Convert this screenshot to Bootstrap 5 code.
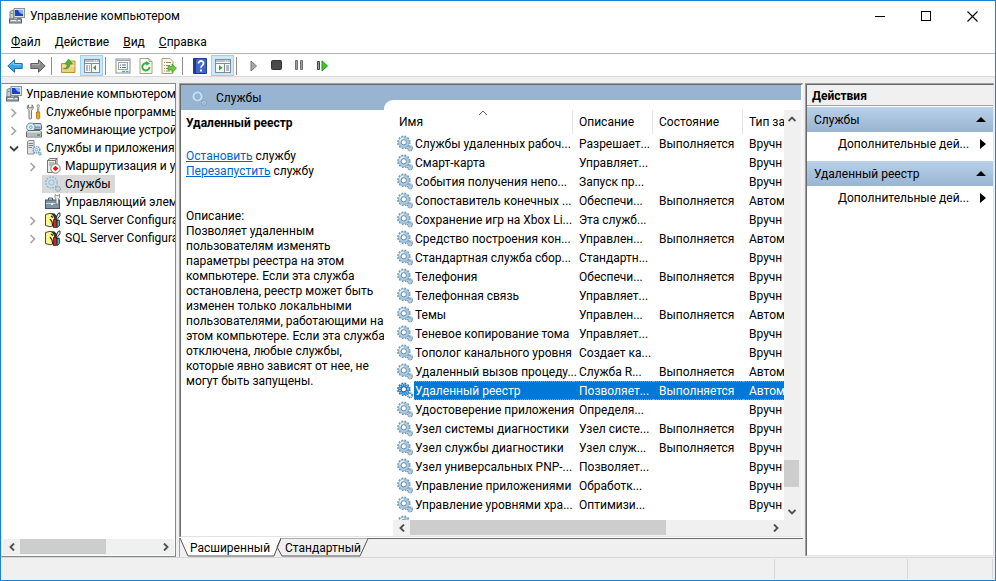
<!DOCTYPE html>
<html lang="ru">
<head>
<meta charset="utf-8">
<meta name="viewport" content="width=device-width, initial-scale=1">
<title>Управление компьютером</title>
<link href="https://cdn.jsdelivr.net/npm/bootstrap@5.3.0/dist/css/bootstrap.min.css" rel="stylesheet">
<style>
  body { font-family: Roboto, "Open Sans", "Noto Sans", sans-serif; font-size: 12px; line-height: 18px; color: #000; background: #f0f0f0; }
  button { font: inherit; color: inherit; background: none; border: 0; padding: 0; }
  svg { flex: none; display: block; }
  .win { border: 1px solid #1883d7; }
  .titlebar { height: 30px; padding-left: 8px; }
  .titlebar .caption-btn { width: 46px; height: 29px; display: flex; align-items: center; justify-content: center; }
  .title-text { font-weight: 400; font-size: 12px; line-height: 18px; margin: 0 0 0 5px; }
  .menubar { height: 23px; padding-left: 10px; gap: 14px; border-bottom: 1px solid #b1b4bc; }
  .toolbar { height: 23px; padding: 1px 0 0 2px; border-bottom: 1px solid #dadada; }
  .tool { width: 23px; height: 21px; display: flex; align-items: center; justify-content: center; }
  .tool.on { background: #cce8ff; outline: 1px solid #99d1ff; outline-offset: -1px; }
  .tool-sep { width: 1px; height: 18px; background: #8d8d8d; margin: 0 5px 0 2px; }
  .panes { padding: 6px 1px 0 0; min-height: 0; }
  .tree-pane { width: 175px; border: 1px solid #828790; border-left-color: #e3e3e3; background: #fff; }
  .tree-pane ul { padding-top: 1px; }
  .tree-row { height: 18px; white-space: nowrap; }
  .twist { width: 20px; height: 18px; padding-top: 2px; display: flex; justify-content: center; align-items: center; flex: none; }
  .tree-row svg.node-ico { margin-right: 4px; }
  .lvl0 { padding-left: 4px; }
  .lvl1 { padding-left: 2px; }
  .lvl2 { padding-left: 21px; }
  .lvl1 .twist, .lvl2 .twist { margin-right: 2px; }
  .picked { background: #d9d9d9; padding: 0 4px 0 3px; margin-left: -3px; }
  .center-pane { margin-left: 3px; min-width: 0; border-left: 1px solid #a0a0a0; border-top: 1px solid #a0a0a0; }
  .center-body { border-left: 1px solid #696969; border-top: 1px solid #696969; border-right: 2px solid #f8f8f8; background: #fff; min-height: 0; border-bottom: 1px solid #e3e3e3; }
  .pane-head { height: 25px; flex: none; padding-left: 10px; background: #99b4d1; }
  .pane-head h2 { font-size: 12px; line-height: 18px; font-weight: 400; margin: 0 0 0 9px; }
  .pane-split { min-height: 0; }
  .detail { width: 203px; flex: none; padding: 6px 0 0 5px; line-height: 15px; white-space: nowrap; }
  .detail h3 { font-size: 12px; line-height: 15px; font-weight: 700; margin: 0 0 18px; }
  .detail p { margin: 0 0 30px; }
  .detail a { color: #0066cc; }
  .list-panel { margin-top: -10px; padding: 10px 0 0 9px; background: #fff; border-top-left-radius: 9px; min-width: 0; min-height: 0; display: grid; grid-template-columns: minmax(0, 1fr) 17px; grid-template-rows: minmax(0, 1fr) 16px; }
  .list-view { overflow: hidden; }
  .svc { table-layout: fixed; width: 450px; border-collapse: separate; border-spacing: 0; line-height: 15px; white-space: nowrap; }
  .col-name { width: 180px; } .col-desc { width: 80px; } .col-state { width: 90px; } .col-start { width: 100px; }
  .svc th { height: 24px; padding: 0 6px; font-weight: 400; position: relative; vertical-align: middle; }
  .svc th::after { content: ""; position: absolute; right: 0; top: 0; bottom: 0; width: 1px; background: #e5e5e5; }
  .svc td { height: 19px; padding: 2px 0 0 6px; border: 0 dotted transparent; border-width: 1px 0; }
  .svc td.nm { padding: 0 0 0 4px; border: 0; }
  .nm-in { display: flex; height: 19px; }
  .nm-in svg { margin: 1px 1px 0 0; }
  .nm-in span { flex: 1; min-width: 0; padding: 2px 0 0 1px; border: 1px dotted transparent; border-right: 0; border-left: 0; }
  .svc tr.sel span, .svc tr.sel td:not(.nm) { background: #0078d7; color: #fff; border-color: #e0904a; }
  .sort { position: absolute; left: 85px; top: 0; }
  .sb { background: #f0f0f0; }
  .sb button { flex: none; width: 17px; height: 16px; display: flex; align-items: center; justify-content: center; }
  .sb.v button { width: 16px; height: 17px; }
  .thumb { background: #cdcdcd; min-width: 0; }
  .tree-pane .sb { height: 16px; margin: 0 1px 1px 1px; }
  .tree-pane .sb .thumb { flex: 87 1 0; margin-bottom: 1px; } .tree-pane .sb .rest { flex: 51 1 0; }
  .h-list .thumb { flex: 256 1 0; margin-bottom: 1px; } .h-list .rest { flex: 101 1 0; }
  .sb.v .before { flex: 333 1 0; } .sb.v .thumb { flex: 27 1 0; margin-right: 2px; } .sb.v .after { flex: 16 1 0; }
  .tabs { height: 20px; flex: none; position: relative; margin-left: -1px; border-top: 1px solid #fff; }
  .tabs::before { content: ""; position: absolute; left: 103px; right: 0; top: 0; height: 1px; background: #696969; }
  .tabs svg { position: absolute; left: 0; top: 0; }
  .tabs button { position: relative; height: 19px; padding-top: 1px; text-align: center; white-space: nowrap; }
  .tab-a { width: 82px; margin-left: 10px; } .tab-b { width: 78px; margin-left: 13px; }
  .act-pane { width: 189px; flex: none; margin: 0 0 1px 2px; border-left: 1px solid #a0a0a0; border-top: 1px solid #a0a0a0; }
  .act-body { border-left: 1px solid #696969; border-top: 1px solid #696969; border-right: 1px solid #e3e3e3; border-bottom: 1px solid #e3e3e3; background: #fff; }
  .act-body h2 { font-size: 12px; line-height: 20px; height: 21px; font-weight: 700; margin: 0 0 1px; padding: 1px 0 0 5px; background: #f0f0f0; border-bottom: 1px solid #a0a0a0; }
  .act-group { height: 25px; width: 100%; padding: 0 7px; background: linear-gradient(#b9d1ea, #99b4d1); }
  .act-item { height: 24px; width: 100%; padding: 0 7px 0 31px; margin-bottom: 5px; }
  .status { height: 23px; flex: none; border-top: 1px solid #d7d7d7; padding: 1px 2px 1px 0; }
  .status div { border-right: 1px solid #d7d7d7; }
  .st-2 { width: 133px; } .st-3 { width: 85px; }
</style>
<script src="https://cdn.jsdelivr.net/npm/bootstrap@5.3.0/dist/js/bootstrap.bundle.min.js"></script>
</head>
<body>
<svg width="0" height="0" class="position-absolute" aria-hidden="true">
  <symbol id="pc" viewBox="0 0 16 16">
    <path d="M1 3.500 4.500 2v9H1z" fill="#c9ced2" stroke="#7d868c"/><path d="M1.500 5.500h2" stroke="#3fb23f"/>
    <rect x="5" y=".5" width="10.500" height="9" fill="#dfe4e8" stroke="#8a939b"/>
    <rect x="6" y="2" width="8" height="6" fill="#1f3fc4"/><path d="M9 2h5v4c-3 0-4-2-5-4z" fill="#8db4f2"/>
    <path d="M8 9.500h4v1.500H8z" fill="#8a939b"/>
    <rect x=".5" y="11" width="12" height="4" fill="#a4acb2" stroke="#5d666d"/><path d="M2 12.500h5M9 12.500h2" stroke="#eef1f3"/>
  </symbol>
  <symbol id="tools" viewBox="0 0 16 16">
    <path d="M2.500.8Q1 2 1.200 4.200L3 6.500v8q1.200 1.200 2.500 0v-8L7.200 4.200Q7.500 2 6 .8v3H2.500z" fill="#e4e7e9" stroke="#6d6d6d" stroke-width=".9"/>
    <path d="M11.500.8h1.500l.5 1.500-.7 1.200V8h-1.200V3.500L11 2.300z" fill="#ddd" stroke="#777" stroke-width=".7"/>
    <path d="M10.500 8h3.200v6.200q-1.600 1.800-3.200 0z" fill="#f1a51d" stroke="#a96b0c" stroke-width=".8"/>
  </symbol>
  <symbol id="disks" viewBox="0 0 16 16">
    <path d="M7 1.500h7.500l1 2V7.500H6z" fill="#d4d8da" stroke="#666"/><path d="M8 4.500h6.500v2H8z" fill="#52a8cf"/>
    <circle cx="4.800" cy="5.200" r="4.200" fill="#d8edf3" stroke="#5f93a5"/><circle cx="4.800" cy="5.200" r="1.300" fill="#fff" stroke="#6fa2b3"/>
    <path d="M.5 10l1.500-1.500h12L15.500 10v5H.5z" fill="#e2e5e7" stroke="#666"/><path d="M1 10.500h14v4H1z" fill="#b4babd"/>
    <path d="M11 12h3v2h-3z" fill="#20c828"/>
  </symbol>
  <symbol id="srv" viewBox="0 0 16 16">
    <path d="M1.500 1.500 3 .5h5v13.500H1.500z" fill="#dfe3e5" stroke="#868e93"/><path d="M2.500 3.500H7M2.500 5.500H7M2.500 7.500H6" stroke="#7b858a"/>
    <circle cx="10.500" cy="9.700" r="3.300" fill="#e4f0f8" stroke="#6f97b5" stroke-width="1.400" stroke-dasharray="1.300 .8"/>
    <circle cx="10.500" cy="9.700" r="1.300" fill="#fff" stroke="#6f97b5" stroke-width=".8"/>
    <circle cx="14" cy="13.800" r="1.500" fill="#a9c8de" stroke="#6f97b5" stroke-dasharray="1 .7"/>
  </symbol>
  <symbol id="route" viewBox="0 0 16 16">
    <path d="M2.500 2.500 5 .5h7l-1.500 2zM2.500 2.500h8v12h-8z" fill="#ecece8" stroke="#77776f"/><path d="M10.500 2.500 12 .5v6" fill="none" stroke="#77776f"/>
    <path d="M4 5h5M4 7h3" stroke="#888"/><circle cx="10.500" cy="10.500" r="4.700" fill="#fff" stroke="#777"/>
    <path d="M10.500 7.800l2.800 2.700-2.800 2.700-2.800-2.700z" fill="#f01010"/>
  </symbol>
  <symbol id="gears" viewBox="0 0 16 16">
    <circle cx="6.800" cy="6.800" r="5.900" fill="none" stroke="#6b93b0" stroke-width="1.700" stroke-dasharray="1.700 1.390"/>
    <circle cx="6.800" cy="6.800" r="4.100" fill="#fff" stroke="#a8cce4" stroke-width="2.800"/>
    <circle cx="6.800" cy="6.800" r="5.300" fill="none" stroke="#86abc5" stroke-width=".7"/>
    <circle cx="6.800" cy="6.800" r="2.600" fill="none" stroke="#587c98" stroke-width=".9"/>
    <path d="M2.800 6a4.200 4.200 0 0 1 4-3.300" fill="none" stroke="#e8f5fc" stroke-width="1.300"/>
    <circle cx="13" cy="12.800" r="2.400" fill="#dbeaf4" stroke="#6a90ad" stroke-width="1.500" stroke-dasharray="1 .5"/>
    <circle cx="13" cy="12.800" r="1" fill="#fff" stroke="#7fa5c0" stroke-width=".8"/>
  </symbol>
  <symbol id="gears-soft" viewBox="0 0 16 16">
    <circle cx="6.500" cy="6.500" r="5.400" fill="none" stroke="#84b4d6" stroke-width="1.700" stroke-dasharray="1.700 1.130"/>
    <circle cx="6.500" cy="6.500" r="4" fill="none" stroke="#c6e0f0" stroke-width="2.200"/>
    <circle cx="6.500" cy="6.500" r="2.700" fill="none" stroke="#86adc8" stroke-width=".7"/>
    <circle cx="13" cy="12.800" r="2" fill="none" stroke="#8098aa" stroke-width="2" stroke-dasharray="1 .57"/>
    <circle cx="13" cy="12.800" r="1.600" fill="none" stroke="#c9dce8" stroke-width=".8"/>
  </symbol>
  <symbol id="gears-sel" viewBox="0 0 16 16">
    <circle cx="6.800" cy="6.800" r="5.900" fill="none" stroke="#2a6fa8" stroke-width="1.700" stroke-dasharray="1.700 1.390"/>
    <circle cx="6.800" cy="6.800" r="4.100" fill="#fff" stroke="#1f7fcb" stroke-width="3"/>
    <circle cx="6.800" cy="6.800" r="4.100" fill="none" stroke="#8fc0e4" stroke-width="2.600" stroke-dasharray="1 1.150"/>
    <circle cx="6.800" cy="6.800" r="2.600" fill="none" stroke="#24587f"/>
    <circle cx="13" cy="12.800" r="2.200" fill="#fff" stroke="#2f7cb8" stroke-width="1.800" stroke-dasharray="1 .6"/>
  </symbol>
  <symbol id="wmi" viewBox="0 0 16 16">
    <path d="M3.500 6V4h4v2" fill="none" stroke="#555"/><rect x=".5" y="6" width="14" height="8.500" fill="#7d94a2" stroke="#44545e"/>
    <path d="M1 9.500h13" stroke="#c5d5de"/><path d="M6 9h2v2H6z" fill="#eee"/>
    <path d="M10 .5v3l1 1.500v5h2.500V5l1-1.500v-3L13 1.500h-1.500z" fill="#e9edef" stroke="#777" stroke-width=".8"/>
  </symbol>
  <symbol id="sql" viewBox="0 0 16 16">
    <path d="M.5 2.500Q5 .2 9.500 2.500v11Q5 16 .5 13.500z" fill="#fbf58a" stroke="#55501a"/>
    <path d="M2 4.500h1M4 3.500h1M2 7.500h1M2 10.500h1M3 12.500h1M5 13.500h1" stroke="#fff"/>
    <path d="M5 7l2 3 .8 4M6 4l2 1.500" stroke="#222" stroke-width="1.200" fill="none"/>
    <path d="M6 1.500h3.500L12 4v2L10 7.500 8.500 4.500z" fill="#333"/><path d="M15 .8v3L12.800 6.500 13 9l-1.800-.5.3-3.500L13 1.500z" fill="#ddd" stroke="#111" stroke-width=".8"/>
    <path d="M8.500 7.500h3V15.500h-3z" fill="#e81c1c" stroke="#111" stroke-width=".7"/><path d="M12.300 8.500h2.200v5l-2.200 2z" fill="#48b8d8" stroke="#111" stroke-width=".7"/>
  </symbol>
  <symbol id="chev-r" viewBox="0 0 8 10"><path d="M1.500 1l4 4-4 4" fill="none" stroke="#a6a6a6" stroke-width="1.700"/></symbol>
  <symbol id="chev-d" viewBox="0 0 10 8"><path d="M1 1.500l4 4 4-4" fill="none" stroke="#404040" stroke-width="1.800"/></symbol>
  <symbol id="sb-l" viewBox="0 0 8 8"><path d="M6 .5L2.500 4 6 7.500" fill="none" stroke="#505050" stroke-width="1.900"/></symbol>
  <symbol id="sb-r" viewBox="0 0 8 8"><path d="M2 .5L5.500 4 2 7.500" fill="none" stroke="#505050" stroke-width="1.900"/></symbol>
  <symbol id="sb-u" viewBox="0 0 8 8"><path d="M.5 6L4 2.500 7.500 6" fill="none" stroke="#505050" stroke-width="1.900"/></symbol>
  <symbol id="sb-d" viewBox="0 0 8 8"><path d="M.5 2L4 5.500 7.500 2" fill="none" stroke="#505050" stroke-width="1.900"/></symbol>
</svg>

<div class="win vh-100 d-flex flex-column overflow-hidden">
  <header class="bg-white">
    <div class="titlebar d-flex align-items-center">
      <svg width="16" height="16"><use href="#pc"/></svg>
      <h1 class="title-text flex-grow-1 text-nowrap">Управление компьютером</h1>
      <button class="caption-btn" aria-label="Свернуть"><svg width="11" height="11"><path d="M0 5.500h10" stroke="#000"/></svg></button>
      <button class="caption-btn" aria-label="Развернуть"><svg width="11" height="11"><rect x=".5" y=".5" width="9" height="9" fill="none" stroke="#000"/></svg></button>
      <button class="caption-btn" aria-label="Закрыть"><svg width="11" height="11"><path d="M.5.5l10 10M10.500.5l-10 10" stroke="#000" stroke-width="1.100"/></svg></button>
    </div>
    <nav class="menubar d-flex align-items-center" aria-label="Меню">
      <button><u>Ф</u>айл</button><button><u>Д</u>ействие</button><button><u>В</u>ид</button><button><u>С</u>правка</button>
    </nav>
    <div class="toolbar d-flex align-items-center" role="toolbar" aria-label="Панель инструментов">
      <button class="tool" aria-label="Назад"><svg width="16" height="14"><path d="M.8 7L7.500.8v3.700h7.700v5H7.500v3.700z" fill="#35a6e6" stroke="#1b6fae"/><path d="M3 6.500L6.500 3v2.700h7.500" fill="none" stroke="#8ed4f7"/></svg></button>
      <button class="tool" aria-label="Вперед"><svg width="16" height="14"><path d="M15.200 7L8.500.8v3.700H.8v5h7.700v3.700z" fill="#8c8c8c" stroke="#5f5f5f"/><path d="M2 5.700h7.500V3" fill="none" stroke="#b5b5b5"/></svg></button>
      <span class="tool-sep"></span>
      <button class="tool" aria-label="На один уровень вверх"><svg width="15" height="16"><path d="M.5 5.500h5l1-2.500H14v11.500H.5z" fill="#f0cf80" stroke="#b8913b"/><path d="M1 8h12.500" stroke="#fbe9b2"/><path d="M2.500 10.500C6 10.500 6 8.500 6 6H4L7.500 1l4 5H9c0 4-3 5.500-6.500 4.500z" fill="#49b934" stroke="#2b8a1c" stroke-width=".6"/></svg></button>
      <button class="tool on" aria-label="Показать дерево консоли"><svg width="16" height="14"><rect x=".5" y=".5" width="15" height="13" fill="#f6f8fa" stroke="#7f8b96"/><path d="M1 2h14M1 4.500h14" stroke="#7f8b96"/><path d="M10 2h1M12 2h1" stroke="#fff"/><path d="M7.500 5v8" stroke="#7f8b96"/><path d="M2 7h2M2 9h2M2 11h2M5 7h1M5 9h1M5 11h1" stroke="#6b7a88"/><path d="M12 6v5.500L9 8.800z" fill="#2fa52b"/></svg></button>
      <span class="tool-sep"></span>
      <button class="tool" aria-label="Свойства"><svg width="16" height="16"><rect x="1" y="1" width="14" height="14" fill="#fdfdfd" stroke="#8a8f96"/><path d="M1.500 2.500h13" stroke="#9aa2ab"/><rect x="3.500" y="4.500" width="9" height="7" fill="#f5f7f9" stroke="#9aa4af"/><path d="M5 7h1M7 7h4M5 9.500h1M7 9.500h4" stroke="#53718f"/><path d="M7 13.500h3M11 13.500h2.500" stroke="#35b2e6" stroke-width="1.500"/></svg></button>
      <button class="tool" aria-label="Обновить"><svg width="14" height="16"><path d="M1 .5h9l3 3v12H1z" fill="#fdfdfa" stroke="#a2a294"/><path d="M10 .5v3h3" fill="none" stroke="#a2a294"/><path d="M10.500 9A3.600 3.600 0 1 1 7.500 5.300" fill="none" stroke="#35ae35" stroke-width="1.900"/><path d="M7 3l4 2.500-3.800 2.300z" fill="#35ae35"/></svg></button>
      <button class="tool" aria-label="Экспортировать список"><svg width="16" height="16"><path d="M1 .5h8l3 3v12H1z" fill="#fcf9e4" stroke="#a8a283"/><path d="M3 4.500h1M5 4.500h5M3 7.500h1M5 7.500h4M3 10.500h1M5 10.500h3M3 13h1M5 13h4" stroke="#8c8971"/><path d="M7 8.500h4V6l4.500 4.200L11 14.500V12H7z" fill="#6cca3b" stroke="#3b9622" stroke-width=".7"/></svg></button>
      <span class="tool-sep"></span>
      <button class="tool" aria-label="Справка"><svg width="14" height="16"><path d="M.5.5h13v15H.5z" fill="#3f63cf" stroke="#203b8c"/><path d="M1 1h2v14H1z" fill="#203b8c"/><path d="M5.500 5.500c0-3.500 5.200-3.200 5 0-.2 2-2.500 1.800-2.500 4.300" fill="none" stroke="#fff" stroke-width="1.800"/><path d="M7 11.500h2v2H7z" fill="#fff"/></svg></button>
      <button class="tool on" aria-label="Показать панель действий"><svg width="16" height="14"><rect x=".5" y=".5" width="15" height="13" fill="#f6f8fa" stroke="#7f8b96"/><path d="M1 2h14M1 4.500h14" stroke="#7f8b96"/><path d="M10 2h1M12 2h1" stroke="#fff"/><path d="M9.500 5v8" stroke="#7f8b96"/><path d="M11 7h3M11 9h3M11 11h3" stroke="#6b7a88"/><path d="M4 6v5.500L7.500 8.800z" fill="#2fa52b"/></svg></button>
      <span class="tool-sep"></span>
      <button class="tool" aria-label="Запустить службу"><svg width="8" height="12"><path d="M1 1l5.500 5L1 11z" fill="#a8a8a8" stroke="#757575"/></svg></button>
      <button class="tool" aria-label="Остановить службу"><svg width="11" height="11"><rect x=".5" y=".5" width="10" height="9" rx="1" fill="#4a4a4a" stroke="#333"/></svg></button>
      <button class="tool" aria-label="Приостановить службу"><svg width="9" height="11"><path d="M.5.5h2v9h-2zM5.500.5h2v9h-2z" fill="#a0a0a0" stroke="#6e6e6e"/></svg></button>
      <button class="tool" aria-label="Перезапустить службу"><svg width="13" height="12"><path d="M1.500 1.500h2v8h-2z" fill="#999" stroke="#444"/><path d="M6 .8L11.500 6 6 11z" fill="#43c529" stroke="#21931a"/></svg></button>
    </div>
  </header>

  <main class="panes d-flex flex-grow-1">
    <nav class="tree-pane d-flex flex-column flex-shrink-0 overflow-hidden" aria-label="Дерево консоли">
      <ul class="list-unstyled m-0 flex-grow-1 overflow-hidden">
        <li class="tree-row lvl0 d-flex align-items-center"><svg class="node-ico" width="16" height="16"><use href="#pc"/></svg>Управление компьютером</li>
        <li class="tree-row lvl1 d-flex align-items-center"><button class="twist" aria-label="Развернуть"><svg width="8" height="10"><use href="#chev-r"/></svg></button><svg class="node-ico" width="16" height="16"><use href="#tools"/></svg>Служебные программы</li>
        <li class="tree-row lvl1 d-flex align-items-center"><button class="twist" aria-label="Развернуть"><svg width="8" height="10"><use href="#chev-r"/></svg></button><svg class="node-ico" width="16" height="16"><use href="#disks"/></svg>Запоминающие устрой</li>
        <li class="tree-row lvl1 d-flex align-items-center"><button class="twist" aria-label="Свернуть"><svg width="10" height="8"><use href="#chev-d"/></svg></button><svg class="node-ico" width="16" height="16"><use href="#srv"/></svg>Службы и приложения</li>
        <li class="tree-row lvl2 d-flex align-items-center"><button class="twist" aria-label="Развернуть"><svg width="8" height="10"><use href="#chev-r"/></svg></button><svg class="node-ico" width="16" height="16"><use href="#route"/></svg>Маршрутизация и у</li>
        <li class="tree-row lvl2 d-flex align-items-center"><span class="twist"></span><span class="picked d-flex align-items-center"><svg class="node-ico" width="16" height="16"><use href="#gears-soft"/></svg>Службы</span></li>
        <li class="tree-row lvl2 d-flex align-items-center"><span class="twist"></span><svg class="node-ico" width="16" height="16"><use href="#wmi"/></svg>Управляющий элем</li>
        <li class="tree-row lvl2 d-flex align-items-center"><button class="twist" aria-label="Развернуть"><svg width="8" height="10"><use href="#chev-r"/></svg></button><svg class="node-ico" width="16" height="16"><use href="#sql"/></svg>SQL Server Configura</li>
        <li class="tree-row lvl2 d-flex align-items-center"><button class="twist" aria-label="Развернуть"><svg width="8" height="10"><use href="#chev-r"/></svg></button><svg class="node-ico" width="16" height="16"><use href="#sql"/></svg>SQL Server Configura</li>
      </ul>
      <div class="sb d-flex"><button aria-label="Влево"><svg width="8" height="8"><use href="#sb-l"/></svg></button><div class="thumb"></div><div class="rest"></div><button aria-label="Вправо"><svg width="8" height="8"><use href="#sb-r"/></svg></button></div>
    </nav>

    <section class="center-pane flex-grow-1 d-flex flex-column">
      <div class="center-body flex-grow-1 d-flex flex-column">
        <div class="pane-head d-flex align-items-center"><svg width="16" height="16"><use href="#gears-soft"/></svg><h2>Службы</h2></div>
        <div class="pane-split d-flex flex-grow-1">
          <div class="detail">
            <h3>Удаленный реестр</h3>
            <p><a href="#stop">Остановить</a> службу<br><a href="#restart">Перезапустить</a> службу</p>
            <p>Описание:<br>Позволяет удаленным<br>пользователям изменять<br>параметры реестра на этом<br>компьютере. Если эта служба<br>остановлена, реестр может быть<br>изменен только локальными<br>пользователями, работающими на<br>этом компьютере. Если эта служба<br>отключена, любые службы,<br>которые явно зависят от нее, не<br>могут быть запущены.</p>
          </div>
          <div class="list-panel flex-grow-1">
            <div class="list-view">
              <table class="svc">
                <colgroup><col class="col-name"><col class="col-desc"><col class="col-state"><col class="col-start"></colgroup>
                <thead><tr><th>Имя<svg class="sort" width="10" height="6"><path d="M1 5l4-4 4 4" fill="none" stroke="#666"/></svg></th><th>Описание</th><th>Состояние</th><th>Тип за</th></tr></thead>
                <tbody id="rows"></tbody>
              </table>
            </div>
            <div class="sb v d-flex flex-column"><button aria-label="Вверх"><svg width="8" height="8"><use href="#sb-u"/></svg></button><div class="before"></div><div class="thumb"></div><div class="after"></div><button aria-label="Вниз"><svg width="8" height="8"><use href="#sb-d"/></svg></button></div>
            <div class="sb h-list d-flex"><button aria-label="Влево"><svg width="8" height="8"><use href="#sb-l"/></svg></button><div class="thumb"></div><div class="rest"></div><button aria-label="Вправо"><svg width="8" height="8"><use href="#sb-r"/></svg></button></div>
            <div class="sb"></div>
          </div>
        </div>
      </div>
      <div class="tabs d-flex">
        <svg width="192" height="19"><path d="M1 0l8 18h86l7-18z" fill="#fff"/><path d="M102 .5L98 9l5 9h78l8-17.500" fill="#f0f0f0" stroke="#555"/><path d="M1 0l8 18h86l7-18" fill="none" stroke="#555"/></svg>
        <button class="tab-a">Расширенный</button><button class="tab-b">Стандартный</button>
      </div>
    </section>

    <aside class="act-pane d-flex">
      <div class="act-body flex-grow-1">
        <h2>Действия</h2>
        <button class="act-group d-flex align-items-center justify-content-between">Службы<svg width="10" height="5"><path d="M0 5l5-5 5 5z"/></svg></button>
        <button class="act-item d-flex align-items-center justify-content-between text-nowrap">Дополнительные дей...<svg width="6" height="10"><path d="M0 0l6 5-6 5z"/></svg></button>
        <button class="act-group d-flex align-items-center justify-content-between">Удаленный реестр<svg width="10" height="5"><path d="M0 5l5-5 5 5z"/></svg></button>
        <button class="act-item d-flex align-items-center justify-content-between text-nowrap">Дополнительные дей...<svg width="6" height="10"><path d="M0 0l6 5-6 5z"/></svg></button>
      </div>
    </aside>
  </main>
  <footer class="status d-flex"><div class="flex-grow-1"></div><div class="st-2"></div><div class="st-3"></div></footer>
</div>
<script>
  const on = "Выполняется", manual = "Вручн", auto = "Автом";
  const services = [
    ["Службы удаленных рабоч...", "Разрешает...", on, manual],
    ["Смарт-карта", "Управляет...", "", manual],
    ["События получения непо...", "Запуск пр...", "", manual],
    ["Сопоставитель конечных ...", "Обеспечи...", on, auto],
    ["Сохранение игр на Xbox Li...", "Эта служб...", "", manual],
    ["Средство построения кон...", "Управлен...", on, auto],
    ["Стандартная служба сбор...", "Стандартн...", "", manual],
    ["Телефония", "Обеспечи...", on, manual],
    ["Телефонная связь", "Управляет...", "", manual],
    ["Темы", "Управлен...", on, auto],
    ["Теневое копирование тома", "Управляет...", "", manual],
    ["Тополог канального уровня", "Создает ка...", "", manual],
    ["Удаленный вызов процеду...", "Служба R...", on, auto],
    ["Удаленный реестр", "Позволяет...", on, auto],
    ["Удостоверение приложения", "Определя...", "", manual],
    ["Узел системы диагностики", "Узел систе...", on, manual],
    ["Узел службы диагностики", "Узел служ...", on, manual],
    ["Узел универсальных PNP-...", "Позволяет...", "", manual],
    ["Управление приложениями", "Обработк...", "", manual],
    ["Управление уровнями хра...", "Оптимизи...", "", manual],
    ["", "", "", ""]
  ];
  const selected = 13;
  document.getElementById("rows").innerHTML = services.map(([name, ...cells], i) => `
    <tr class="${i === selected ? "sel" : ""}"><td class="nm"><div class="nm-in"><svg width="16" height="17"><use href="#${i === selected ? "gears-sel" : "gears"}"/></svg><span>${name}</span></div></td>${cells.map(c => `<td>${c}</td>`).join("")}</tr>`).join("");
</script>
</body>
</html>
